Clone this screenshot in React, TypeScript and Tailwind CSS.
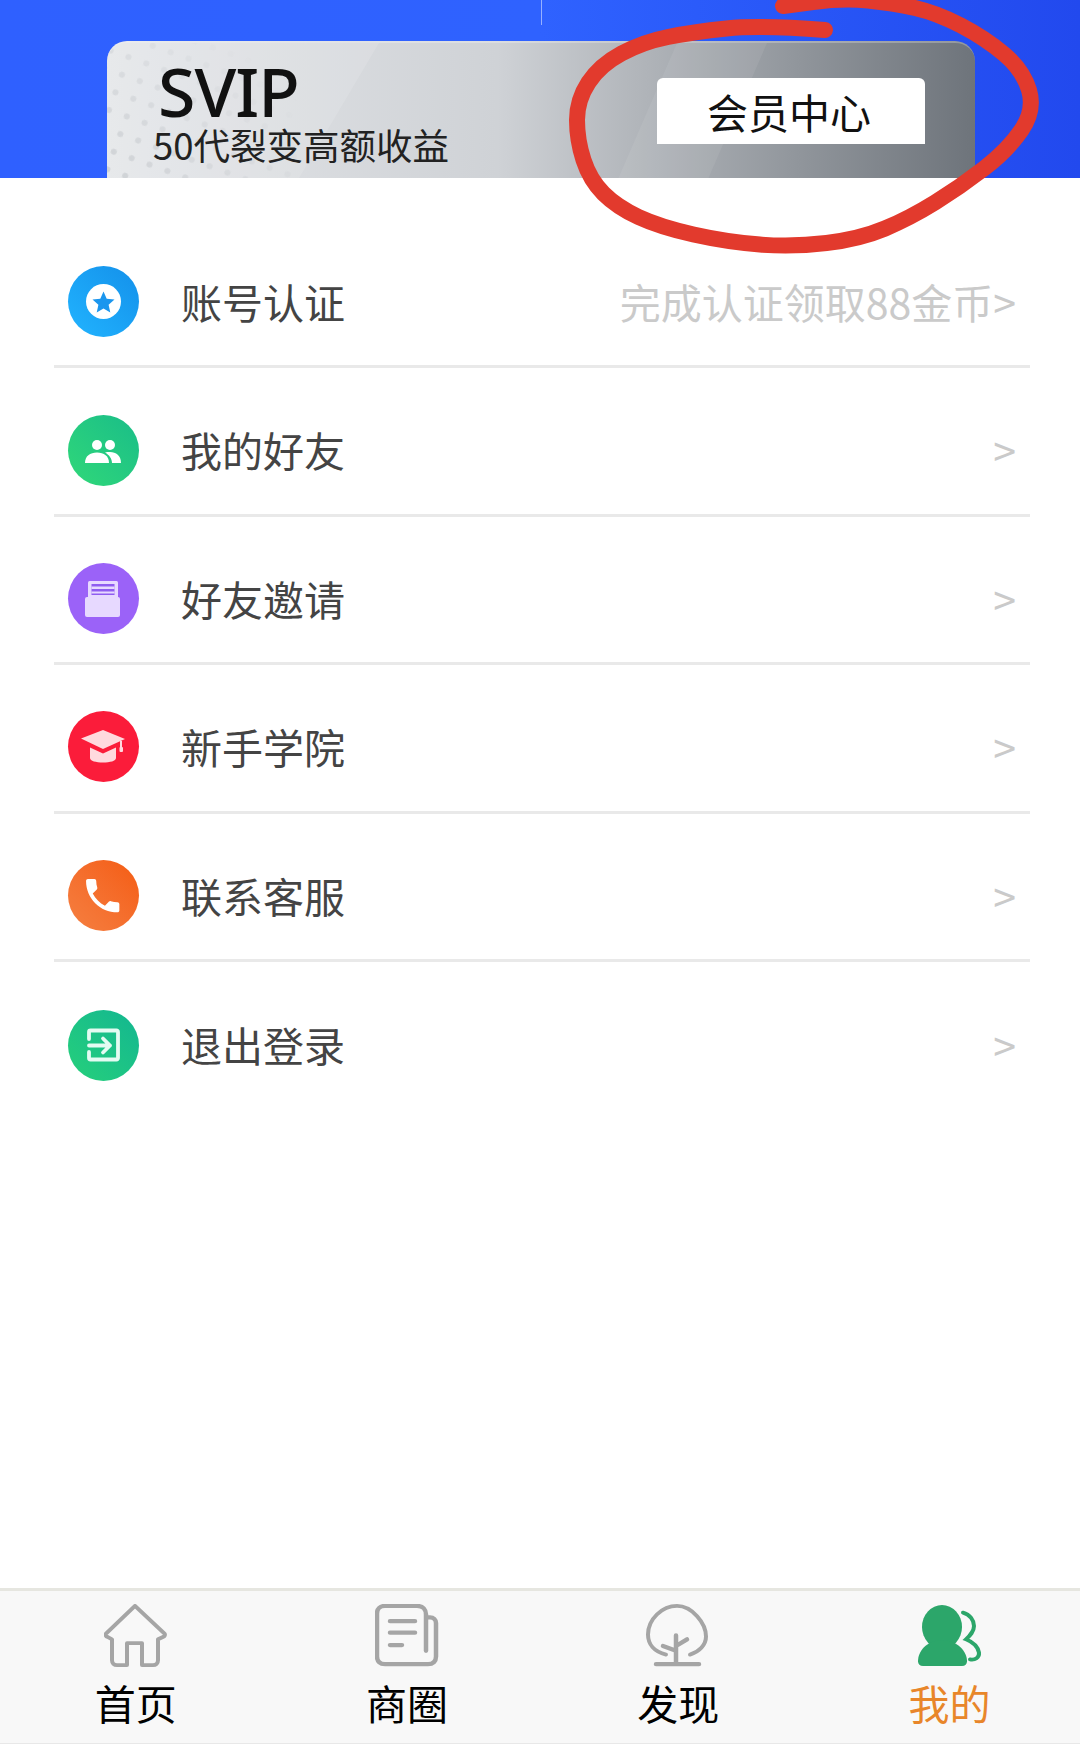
import React from "react";

// hand-traced pen circle, page coordinates
const penPoints = [
  [825, 30], [760, 25], [693, 32], [643, 42], [600, 65], [577, 100], [577, 140], [590, 180],
  [617, 207], [660, 227], [727, 242], [793, 247], [860, 239], [910, 218], [960, 187], [1008, 150],
  [1035, 110], [1023, 70], [985, 38], [937, 13], [893, 3], [843, -2], [783, 6],
];

const penPath = () => {
  let d = `M${penPoints[0][0]} ${penPoints[0][1]}`;
  for (let i = 1; i < penPoints.length - 1; i++) {
    const [x, y] = penPoints[i];
    const [nx, ny] = penPoints[i + 1];
    d += ` Q${x} ${y} ${(x + nx) / 2} ${(y + ny) / 2}`;
  }
  const last = penPoints[penPoints.length - 1];
  return d + ` L${last[0]} ${last[1]}`;
};

const StarIcon = () => (
  <svg viewBox="0 0 71 71" className="w-full h-full">
    <circle cx="35.5" cy="35.5" r="17.5" fill="#fff" />
    <path d="M35.5 25.5l3.2 7.2 7.8.8-5.9 5.2 1.7 7.7-6.8-4-6.8 4 1.7-7.7-5.9-5.2 7.8-.8z" fill="#1b96ee" />
  </svg>
);

const FriendsIcon = () => (
  <svg viewBox="0 0 71 71" className="w-full h-full" fill="#fff">
    <circle cx="29" cy="30" r="5" />
    <circle cx="42" cy="30" r="5" />
    <path d="M17 48c0-7 5-10.500 12-10.500S41 41 41 48z" />
    <path d="M37 37.500c1.500-.4 3-.5 5-.5 6 0 11 3.500 11 11h-9c0-4-2.500-8-7-10.500z" />
  </svg>
);

const InviteIcon = () => (
  <svg viewBox="0 0 71 71" className="w-full h-full">
    <rect x="20" y="18" width="30" height="18" rx="1.500" fill="#e7d9ff" />
    <rect x="23.500" y="21" width="23" height="11" fill="#8f5cf0" />
    <rect x="23.500" y="23.500" width="23" height="2.500" fill="#e7d9ff" />
    <rect x="23.500" y="28.500" width="23" height="2" fill="#e7d9ff" />
    <rect x="17" y="34" width="35" height="20" rx="2" fill="#e7d9ff" />
  </svg>
);

const CapIcon = () => (
  <svg viewBox="0 0 71 71" className="w-full h-full" fill="#ffd9de">
    <path d="M22 36.500l13 6 13-6V47c0 3-6 4.500-13 4.500S22 50 22 47z" />
    <path d="M13 27.500L35 19l22 9-22 10z" />
    <rect x="52" y="30" width="2" height="7" />
    <rect x="51.500" y="36" width="3.500" height="5" rx="1" />
  </svg>
);

const PhoneIcon = () => (
  <svg viewBox="0 0 71 71" className="w-full h-full" fill="#fff">
    <path
      transform="translate(12.500 13.500) scale(1.850)"
      d="M6.620 10.790c1.440 2.830 3.760 5.140 6.590 6.590l2.200-2.200c.270-.270.670-.360 1.020-.240 1.120.370 2.330.570 3.570.570.550 0 1 .450 1 1V20c0 .550-.450 1-1 1-9.390 0-17-7.610-17-17 0-.550.450-1 1-1h3.500c.550 0 1 .450 1 1 0 1.250.200 2.450.570 3.570.110.350.030.740-.250 1.020l-2.200 2.200z"
    />
  </svg>
);

const LogoutIcon = () => (
  <svg viewBox="0 0 71 71" className="w-full h-full" fill="none" stroke="#e4fbf2" strokeWidth="3.800" strokeLinecap="round" strokeLinejoin="round">
    <path d="M21 29v-7a1.500 1.500 0 0 1 1.500-1.500h26A1.500 1.500 0 0 1 50 22v26a1.500 1.500 0 0 1-1.500 1.500h-26A1.500 1.500 0 0 1 21 48v-6" />
    <path d="M21 35.500h21M35 28.500l7 7-7 7" />
  </svg>
);

const HomeTab = () => (
  <svg viewBox="0 0 64 66" preserveAspectRatio="none" className="w-[64px] h-[63px]" fill="none" stroke="#a5a5a5" strokeWidth="4" strokeLinejoin="round">
    <path d="M31 2L2 31c-1 1.500 0 3 1.500 3.500L8 37v22c0 3 2 5 5 5h10V41h15v23h11c3 0 5-2 5-5V37l5-2.500c1.500-.5 2.500-2 1.500-3.500z" />
  </svg>
);

const PaperTab = () => (
  <svg viewBox="0 0 64 66" preserveAspectRatio="none" className="w-[64px] h-[63px]" fill="none" stroke="#a5a5a5" strokeWidth="4.500" strokeLinecap="round">
    <path d="M52 14h3c3.500 0 6 2.500 6 6v35c0 5-3 8-8 8H10c-5 0-8-3-8-8V10c0-5 3-8 8-8h32c6 0 9 4 9 9v38" />
    <path d="M15 18h25M15 30h25M15 43h12" />
  </svg>
);

const TreeTab = () => (
  <svg viewBox="0 0 64 66" preserveAspectRatio="none" className="w-[64px] h-[63px]" fill="none" stroke="#a5a5a5" strokeWidth="4" strokeLinecap="round">
    <path d="M20 53C8 50 2 42 2 32 2 16 16 2 31 2s29 18 29 32c0 9-7 16-16 19" />
    <path d="M30 33v30M10 63h43M17 44l13 5M41 37l-11 7" strokeWidth="4.500" />
  </svg>
);

const MineTab = () => (
  <svg viewBox="0 0 64 66" preserveAspectRatio="none" className="w-[64px] h-[63px]">
    <ellipse cx="24" cy="24" rx="20" ry="23" fill="#2ca66a" />
    <path d="M0 60c0-10 8-22 24-22s25 12 25 22c0 3-2 5-5 5H5c-3 0-5-2-5-5z" fill="#2ca66a" />
    <path d="M45 9c7 2 11 8 11 14 0 6-4 10-8 14 7 3 12 8 13 14 .5 5-4 8-9 7" fill="none" stroke="#2ca66a" strokeWidth="4" strokeLinecap="round" />
  </svg>
);

const rows = [
  { label: "账号认证", hint: "完成认证领取88金币>", circle: "bg-gradient-to-tr from-[#22b4ff] to-[#1490ea]", Icon: StarIcon },
  { label: "我的好友", hint: ">", circle: "bg-gradient-to-tr from-[#30d878] to-[#19bd88]", Icon: FriendsIcon },
  { label: "好友邀请", hint: ">", circle: "bg-[#9b62f8]", Icon: InviteIcon },
  { label: "新手学院", hint: ">", circle: "bg-[#fb1c3a]", Icon: CapIcon },
  { label: "联系客服", hint: ">", circle: "bg-gradient-to-tr from-[#f57f40] to-[#f45c10]", Icon: PhoneIcon },
  { label: "退出登录", hint: ">", circle: "bg-gradient-to-tr from-[#26d07a] to-[#13b690]", Icon: LogoutIcon },
];

const tabs = [
  { label: "首页", Icon: HomeTab, active: false },
  { label: "商圈", Icon: PaperTab, active: false },
  { label: "发现", Icon: TreeTab, active: false },
  { label: "我的", Icon: MineTab, active: true },
];

export default function App() {
  return (
    <div className="relative w-[1080px] h-[1763px] overflow-hidden bg-white flex flex-col font-['Noto_Sans_CJK_SC','Noto_Sans',sans-serif]">
      {/* blue header with the SVIP card cut off at its bottom */}
      <header className="relative h-[178px] shrink-0 overflow-hidden pt-[41px] px-[107px] bg-gradient-to-r from-[#2f60ff] via-[#2f62ff] to-[#2249ee]">
        <div className="absolute left-[541px] top-0 w-px h-[25px] bg-white/50" />
        <div className="relative h-[180px] w-[868px] rounded-t-[20px] overflow-hidden border-t-2 border-white/25 bg-gradient-to-r from-[#e4e6e9] via-[#cfd2d6] via-45% to-[#6e747b]">
          <svg className="absolute inset-0 w-full h-full" viewBox="0 0 868 180" preserveAspectRatio="none">
            <defs>
              <pattern id="dots" width="19" height="19" patternUnits="userSpaceOnUse" patternTransform="rotate(20)">
                <circle cx="6" cy="6" r="3" fill="#cbced2" />
              </pattern>
              <linearGradient id="fade" x1="0" y1="1" x2="0.9" y2="0.2">
                <stop offset="0" stopColor="#fff" />
                <stop offset="1" stopColor="#000" />
              </linearGradient>
              <mask id="dotsMask">
                <rect width="190" height="180" fill="url(#fade)" />
              </mask>
            </defs>
            <polygon points="0,0 272,0 190,140 0,140" fill="#fff" opacity="0.12" />
            <polygon points="570,0 660,0 600,140 510,140" fill="#fff" opacity="0.07" />
            <rect width="868" height="180" fill="url(#dots)" mask="url(#dotsMask)" />
          </svg>
          <div className="relative flex justify-between pl-[51px] pr-[50px]">
            <div className="flex flex-col">
              <div className="font-['Noto_Sans',sans-serif] font-medium text-[68px] leading-[64px] text-[#111] mt-[16px] tracking-[-1px]">SVIP</div>
              <div className="text-[36.500px] leading-[40px] text-[#222] -ml-[5px] mt-[2px]">50代裂变高额收益</div>
            </div>
            <button className="w-[268px] h-[66px] mt-[35px] pr-[4px] bg-white rounded-t-[6px] text-[41px] leading-[64px] text-[#111]">会员中心</button>
          </div>
        </div>
      </header>

      {/* menu */}
      <ul className="flex-1 pt-[42px] pl-[54px] pr-[50px]">
        {rows.map(({ label, hint, circle, Icon }, i) => (
          <li
            key={label}
            className={`h-[148.4px] pt-[18px] pl-[14px] pr-[14px] flex items-center ${i < rows.length - 1 ? "border-b-[3px] border-[#e9e9e9]" : ""}`}
          >
            <div className={`w-[71px] h-[71px] rounded-full ${circle}`}>
              <Icon />
            </div>
            <span className="ml-[42px] text-[41px] text-[#444]">{label}</span>
            <span className="ml-auto text-[41px] text-[#cacaca]">{hint}</span>
          </li>
        ))}
      </ul>

      {/* bottom tabs */}
      <nav className="h-[156px] shrink-0 mb-[19px] bg-[#f8f8f8] border-t-[3px] border-b border-t-[#e6e6e0] border-b-[#e8e8e8] grid grid-cols-[repeat(4,271.300px)]">
        {tabs.map(({ label, Icon, active }) => (
          <div key={label} className="flex flex-col items-center pt-[13px]">
            <Icon />
            <span className={`text-[41px] leading-[56px] mt-[7px] ${active ? "text-[#e8862a]" : "text-black"}`}>{label}</span>
          </div>
        ))}
      </nav>

      {/* red pen mark over the screenshot */}
      <svg className="absolute left-0 top-0 pointer-events-none" width="1080" height="270" viewBox="0 0 1080 270" fill="none">
        <path d={penPath()} stroke="#e23a2d" strokeWidth="16" strokeLinecap="round" strokeLinejoin="round" />
      </svg>
    </div>
  );
}
